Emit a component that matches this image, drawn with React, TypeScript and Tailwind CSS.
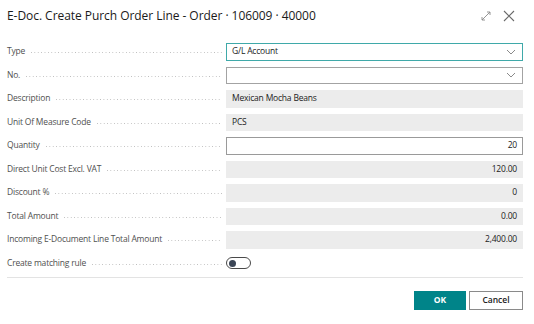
import React from "react";

const Chevron = () => (
  <svg width="10" height="6" viewBox="0 0 10 6" className="shrink-0">
    <path d="M1 1 L5 5 L9 1" fill="none" stroke="#8a8a8a" strokeWidth="1" />
  </svg>
);

type Row = {
  label: string;
  kind: "select-focus" | "select" | "ro" | "input" | "toggle";
  value?: string;
  right?: boolean;
};

const rows: Row[] = [
  { label: "Type", kind: "select-focus", value: "G/L Account" },
  { label: "No.", kind: "select", value: "" },
  { label: "Description", kind: "ro", value: "Mexican Mocha Beans" },
  { label: "Unit Of Measure Code", kind: "ro", value: "PCS" },
  { label: "Quantity", kind: "input", value: "20", right: true },
  { label: "Direct Unit Cost Excl. VAT", kind: "ro", value: "120.00", right: true },
  { label: "Discount %", kind: "ro", value: "0", right: true },
  { label: "Total Amount", kind: "ro", value: "0.00", right: true },
  { label: "Incoming E-Document Line Total Amount", kind: "ro", value: "2,400.00", right: true },
  { label: "Create matching rule", kind: "toggle" },
];

const txt = "text-[8.5px] tracking-[-0.2px] text-[#212121]";

function Field({ row }: { row: Row }) {
  if (row.kind === "toggle") {
    return (
      <div className="w-[297px] h-full flex items-center">
        <div className="w-[25px] h-[12px] rounded-full border border-[#4a4a4a] flex items-center pl-[2px]">
          <div className="w-[7px] h-[7px] rounded-full bg-[#3b4556]" />
        </div>
      </div>
    );
  }
  if (row.kind === "select-focus" || row.kind === "select") {
    return (
      <div
        className={
          "w-[297px] h-full flex items-center justify-between pl-[5px] pr-[6px] bg-white border " +
          (row.kind === "select-focus" ? "border-[#3fa9a9]" : "border-[#a3a3a3]")
        }
      >
        <span className={txt}>{row.value}</span>
        <Chevron />
      </div>
    );
  }
  if (row.kind === "input") {
    return (
      <div className="w-[297px] h-full flex items-center justify-end px-[5px] bg-white border border-[#9a9a9a]">
        <span className={txt}>{row.value}</span>
      </div>
    );
  }
  return (
    <div
      className={
        "w-[297px] h-full flex items-center px-[6px] bg-[#ececec] " +
        (row.right ? "justify-end" : "justify-start")
      }
    >
      <span className={txt}>{row.value}</span>
    </div>
  );
}

export default function App() {
  return (
    <div className="w-[534px] h-[324px] bg-white overflow-hidden font-['Open_Sans',sans-serif] text-[#212121]">
      <div className="h-[31px] flex items-center justify-between pl-[7px] pr-[19px] pt-[1px]">
        <div className="text-[12px] text-[#1a1a1a] tracking-[-0.05px]">
          E-Doc. Create Purch Order Line - Order · 106009 · 40000
        </div>
        <div className="flex items-center gap-[11px]">
          <svg width="12" height="12" viewBox="0 0 12 12">
            <path d="M2 10 L10 2 M7 2 H10 V5 M2 7 V10 H5" fill="none" stroke="#8a8a8a" strokeWidth="0.9" />
          </svg>
          <svg width="12" height="12" viewBox="0 0 12 12">
            <path d="M1 1 L11 11 M11 1 L1 11" fill="none" stroke="#6a6a6a" strokeWidth="1.1" />
          </svg>
        </div>
      </div>
      <div className="mt-[12px] flex flex-col gap-[6px] pl-[7px] pr-[11px]">
        {rows.map((r) => (
          <div key={r.label} className="h-[17.5px] flex items-center">
            <div className="w-[219px] pr-[4px] flex items-center h-full">
              <span className="text-[8.5px] tracking-[-0.2px] text-[#505050] whitespace-nowrap">{r.label}</span>
              <div className="flex-1 ml-[6px] mt-[2px] h-[1px] bg-[linear-gradient(to_right,#bdbdbd_1px,transparent_1px)] bg-[length:3.4px_1px] bg-repeat-x" />
            </div>
            <Field row={r} />
          </div>
        ))}
      </div>
      <div className="mt-[4.5px] mx-[7px] mr-[11px] h-[1px] bg-[#e3e3e3]" />
      <div className="flex justify-end gap-[3px] pr-[11px] mt-[13px]">
        <button className="w-[52px] h-[19px] bg-[#008489] text-white text-[8.5px] font-bold">OK</button>
        <button className="w-[54px] h-[19px] bg-white border border-[#8a8a8a] text-[#212121] text-[8.5px] font-semibold">Cancel</button>
      </div>
    </div>
  );
}
